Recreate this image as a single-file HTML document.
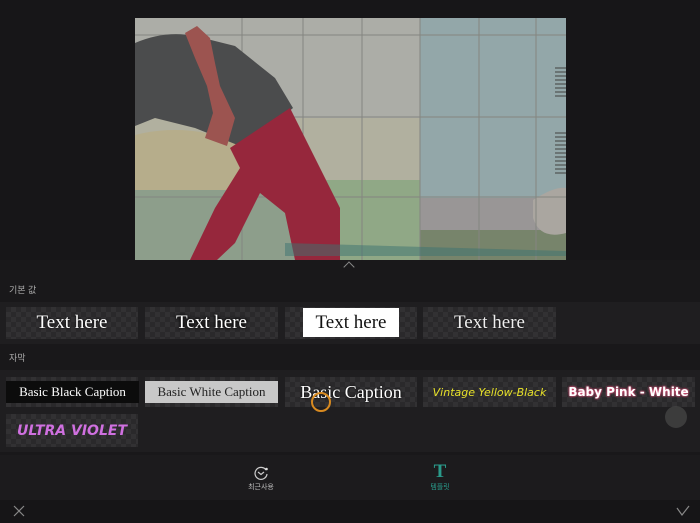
<!DOCTYPE html>
<html><head><meta charset="utf-8"><style>
*{margin:0;padding:0;box-sizing:border-box}
body{width:700px;height:523px;background:#19181a;position:relative;overflow:hidden;font-family:"Liberation Sans","Noto Sans CJK KR",sans-serif}
.a{position:absolute}
.chk{background-color:#2a292b;background-image:linear-gradient(45deg,#323133 25%,transparent 25%,transparent 75%,#323133 75%),linear-gradient(45deg,#323133 25%,transparent 25%,transparent 75%,#323133 75%);background-size:10px 10px;background-position:0 0,5px 5px}
.t{font-family:"Liberation Serif",serif;color:#fff;display:flex;align-items:center;justify-content:center}
.lbl{color:#aaa;font-size:9px}
</style></head><body>
<div class="a" style="left:0;top:0;width:700px;height:260px;background:#171618"></div>
<svg class="a" style="left:135px;top:18px" width="431" height="242" viewBox="0 0 431 242">
<rect width="431" height="242" fill="#b7b8b2"/>
<rect x="0" y="100" width="285" height="80" fill="#bdbba9"/>
<ellipse cx="40" cy="150" rx="80" ry="38" fill="#c2b894"/>
<rect x="285" y="0" width="146" height="180" fill="#9db2b4"/>
<rect x="0" y="172" width="285" height="70" fill="#96a894"/>
<rect x="190" y="162" width="95" height="80" fill="#9ab38f"/>
<rect x="285" y="180" width="146" height="62" fill="#a3a0a0"/>
<rect x="285" y="212" width="146" height="30" fill="#7f8d72"/>
<path d="M398 182 Q420 168 431 170 L431 215 Q405 222 398 200Z" fill="#b5b1ab"/>
<g stroke="#8d8e89" stroke-width="1"><line x1="107" y1="0" x2="107" y2="242"/><line x1="168" y1="0" x2="168" y2="242"/><line x1="227" y1="0" x2="227" y2="242"/><line x1="285" y1="0" x2="285" y2="242"/><line x1="344" y1="0" x2="344" y2="242"/><line x1="401" y1="0" x2="401" y2="242"/><line x1="0" y1="17" x2="431" y2="17"/><line x1="0" y1="99" x2="431" y2="99"/><line x1="0" y1="179" x2="431" y2="179"/></g>
<g stroke="#444" stroke-width="1"><path d="M420 50H431M420 54H431M420 58H431M420 62H431M420 66H431M420 70H431M420 74H431M420 78H431"/><path d="M420 115H431M420 119H431M420 123H431M420 127H431M420 131H431M420 135H431M420 139H431M420 143H431M420 147H431M420 151H431M420 155H431"/></g>
<path d="M0 25 Q30 12 60 18 L100 28 L140 60 L158 90 L110 130 L60 110 L20 100 L0 108Z" fill="#505152"/>
<path d="M50 15 L62 8 L75 20 L80 45 L85 68 L100 100 L92 128 L70 120 L78 95 L72 68 L60 40Z" fill="#a65a56"/>
<path d="M95 130 L155 90 L180 140 L205 190 L205 242 L160 242 L150 195 L125 175 L100 225 L82 242 L55 242 L80 190 L105 150Z" fill="#a02a40"/>
<path d="M150 225 L431 233 L431 238 L150 238Z" fill="#3f7a78" opacity=".5"/>
<rect width="431" height="242" fill="#000" opacity=".06"/>
</svg>
<div class="a" style="left:345px;top:263px;width:8px;height:8px;border-left:1px solid #888;border-top:1px solid #888;transform:rotate(45deg)"></div>
<div class="a lbl" style="left:9px;top:283px">기본 값</div>
<div class="a" style="left:0;top:302px;width:700px;height:42px;background:#1f1e20"></div>
<div class="a chk t" style="left:6px;top:307px;width:132px;height:32px;font-size:19px;text-shadow:0 0 2px #000">Text here</div>
<div class="a chk t" style="left:145px;top:307px;width:133px;height:32px;font-size:19px;text-shadow:0 0 3px #000,0 0 3px #000">Text here</div>
<div class="a chk" style="left:285px;top:307px;width:132px;height:32px"></div>
<div class="a t" style="left:303px;top:308px;width:96px;height:29px;background:#fff;color:#111;font-size:19px">Text here</div>
<div class="a chk t" style="left:423px;top:307px;width:133px;height:32px;font-size:19px;color:#eee;text-shadow:0 0 2px #000">Text here</div>
<div class="a lbl" style="left:9px;top:351px">자막</div>
<div class="a" style="left:0;top:370px;width:700px;height:82px;background:#1f1e20"></div>
<div class="a chk" style="left:6px;top:377px;width:132px;height:30px"></div>
<div class="a t" style="left:6px;top:381px;width:133px;height:22px;background:#0c0c0c;font-size:13px">Basic Black Caption</div>
<div class="a chk" style="left:145px;top:377px;width:133px;height:30px"></div>
<div class="a t" style="left:145px;top:381px;width:133px;height:22px;background:#c8c8c8;color:#222;font-size:13px">Basic White Caption</div>
<div class="a chk t" style="left:285px;top:377px;width:132px;height:30px;font-size:18px;text-shadow:0 0 2px #000">Basic Caption</div>
<div class="a chk t" style="left:423px;top:377px;width:133px;height:30px;font-size:11px;font-style:italic;color:#e8e22a;font-family:'DejaVu Sans',sans-serif">Vintage Yellow-Black</div>
<div class="a chk t" style="left:562px;top:377px;width:133px;height:30px;font-size:12px;font-weight:bold;color:#fff;font-family:'DejaVu Sans',sans-serif;text-shadow:0 0 2px #e0507a,0 0 2px #e0507a">Baby Pink - White</div>
<div class="a chk t" style="left:6px;top:414px;width:132px;height:33px;font-size:14px;font-weight:bold;font-style:italic;color:#d070e0;font-family:'DejaVu Sans',sans-serif">ULTRA VIOLET</div>
<div class="a" style="left:311px;top:392px;width:20px;height:20px;border:2px solid #d88a20;border-radius:50%"></div>
<div class="a" style="left:665px;top:406px;width:22px;height:22px;border-radius:50%;background:#444;opacity:.8"></div>
<div class="a" style="left:0;top:455px;width:700px;height:45px;background:#1c1b1d"></div>
<svg class="a" style="left:253px;top:465px" width="16" height="16" viewBox="0 0 16 16"><path d="M13 5 A6 6 0 1 0 14 9" fill="none" stroke="#ccc" stroke-width="1.2"/><path d="M5 7 L8 9.5 L11 7" fill="none" stroke="#ccc" stroke-width="1.2"/><circle cx="13.5" cy="4" r="1.3" fill="#ddd"/></svg>
<div class="a" style="left:243px;top:482px;width:36px;text-align:center;font-size:7px;color:#bbb">최근사용</div>
<div class="a" style="left:432px;top:463px;width:16px;text-align:center;font-family:'Liberation Serif',serif;font-weight:bold;font-size:19px;color:#2a9a8a;line-height:18px">T</div>
<div class="a" style="left:422px;top:482px;width:36px;text-align:center;font-size:7px;color:#2a9a8a">템플릿</div>
<div class="a" style="left:0;top:500px;width:700px;height:23px;background:#161517"></div>
<svg class="a" style="left:13px;top:505px" width="12" height="12"><path d="M1 1L11 11M11 1L1 11" stroke="#888" stroke-width="1.2"/></svg>
<svg class="a" style="left:676px;top:505px" width="14" height="12"><path d="M1 3L6 10L13 1" fill="none" stroke="#888" stroke-width="1.2"/></svg>
</body></html>
